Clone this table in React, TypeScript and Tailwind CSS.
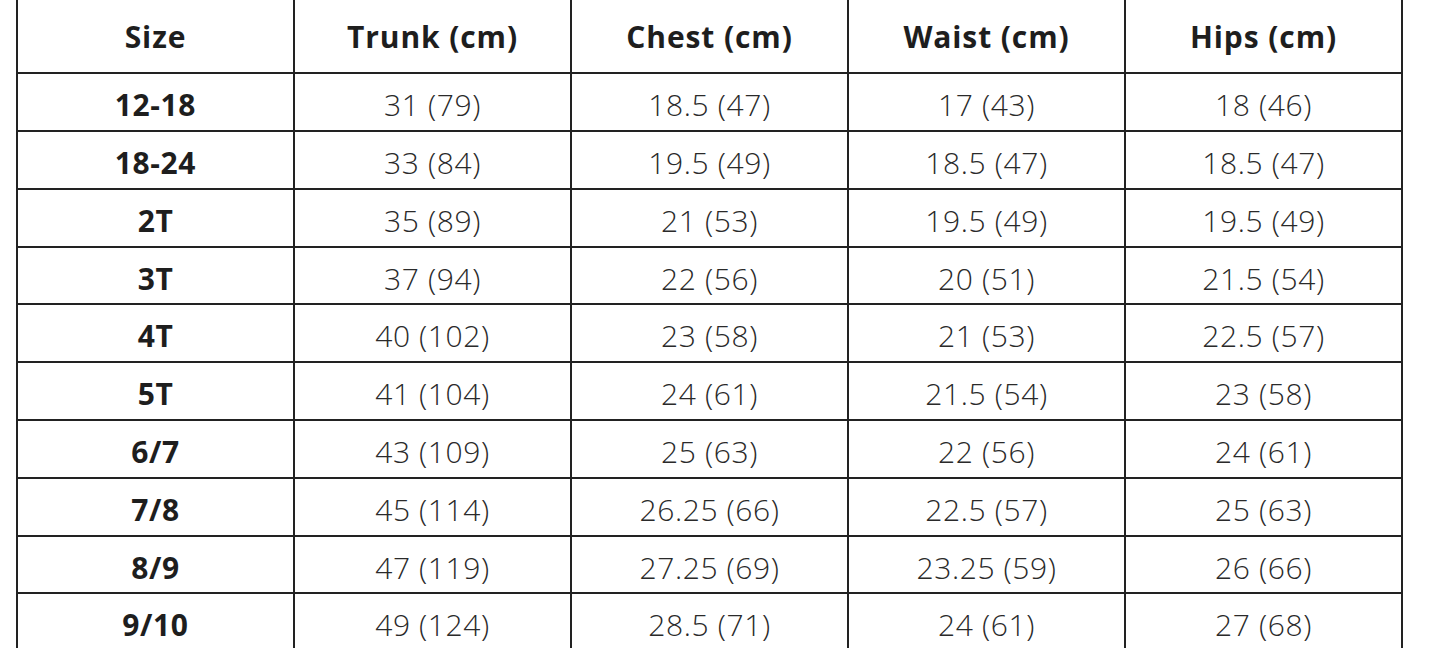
import React from "react";

const headers = ["Size", "Trunk (cm)", "Chest (cm)", "Waist (cm)", "Hips (cm)"];
const rows: string[][] = [
  ["12-18", "31 (79)", "18.5 (47)", "17 (43)", "18 (46)"],
  ["18-24", "33 (84)", "19.5 (49)", "18.5 (47)", "18.5 (47)"],
  ["2T", "35 (89)", "21 (53)", "19.5 (49)", "19.5 (49)"],
  ["3T", "37 (94)", "22 (56)", "20 (51)", "21.5 (54)"],
  ["4T", "40 (102)", "23 (58)", "21 (53)", "22.5 (57)"],
  ["5T", "41 (104)", "24 (61)", "21.5 (54)", "23 (58)"],
  ["6/7", "43 (109)", "25 (63)", "22 (56)", "24 (61)"],
  ["7/8", "45 (114)", "26.25 (66)", "22.5 (57)", "25 (63)"],
  ["8/9", "47 (119)", "27.25 (69)", "23.25 (59)", "26 (66)"],
  ["9/10", "49 (124)", "28.5 (71)", "24 (61)", "27 (68)"],
];

export default function App() {
  return (
    <div className="w-[1445px] h-[648px] overflow-hidden bg-white" style={{ fontFamily: "'Open Sans', 'Noto Sans', sans-serif" }}>
      <div className="ml-[16px] -mt-[2px] w-[1387px] border-l-2 border-t-2 border-[#222] grid grid-cols-[277px_277px_277px_277px_277px] grid-rows-[74px_58px_58px_58px_57px_58px_58px_58px_58px_57px_58px] text-[#1e1e1e]">
        {headers.map((h) => (
          <div key={h} className="border-r-2 border-b-2 border-[#222] flex items-center justify-center pt-[2px] text-[30px] font-bold tracking-[0.9px] leading-none">
            {h}
          </div>
        ))}
        {rows.map((r, i) =>
          r.map((c, j) => (
            <div
              key={i + "-" + j}
              className={
                "border-r-2 border-b-2 border-[#222] flex items-center justify-center pt-[6px] leading-none " +
                (j === 0 ? "text-[30px] font-bold tracking-[0.6px]" : "text-[30px] font-light tracking-[0.6px] text-[#2a2a2a]")
              }
            >
              {c}
            </div>
          ))
        )}
      </div>
    </div>
  );
}
